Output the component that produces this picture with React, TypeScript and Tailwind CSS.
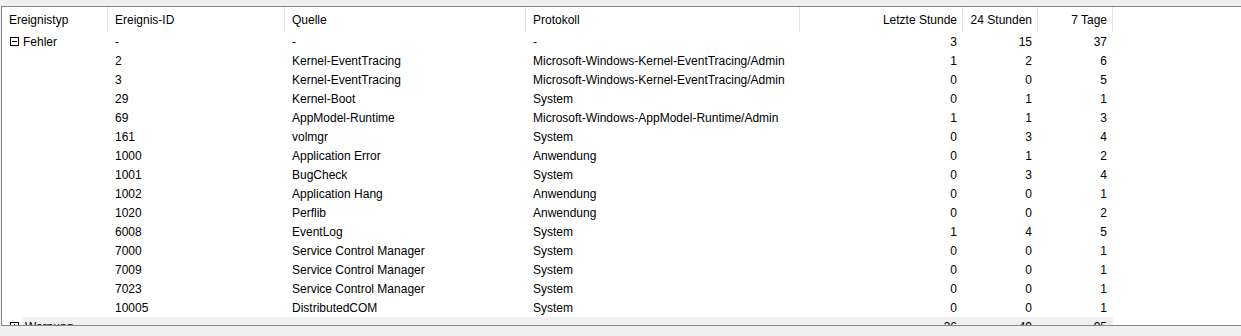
import React from 'react';

type Col = { label: string; w: string; right?: boolean };

const cols: Col[] = [
  { label: 'Ereignistyp', w: 'w-[106px]' },
  { label: 'Ereignis-ID', w: 'w-[177px]' },
  { label: 'Quelle', w: 'w-[241px]' },
  { label: 'Protokoll', w: 'w-[274px]' },
  { label: 'Letzte Stunde', w: 'w-[163px]', right: true },
  { label: '24 Stunden', w: 'w-[75px]', right: true },
  { label: '7 Tage', w: 'w-[75px]', right: true },
];

// [id, quelle, protokoll, h, 24h, 7d]
const rows: string[][] = [
  ['2', 'Kernel-EventTracing', 'Microsoft-Windows-Kernel-EventTracing/Admin', '1', '2', '6'],
  ['3', 'Kernel-EventTracing', 'Microsoft-Windows-Kernel-EventTracing/Admin', '0', '0', '5'],
  ['29', 'Kernel-Boot', 'System', '0', '1', '1'],
  ['69', 'AppModel-Runtime', 'Microsoft-Windows-AppModel-Runtime/Admin', '1', '1', '3'],
  ['161', 'volmgr', 'System', '0', '3', '4'],
  ['1000', 'Application Error', 'Anwendung', '0', '1', '2'],
  ['1001', 'BugCheck', 'System', '0', '3', '4'],
  ['1002', 'Application Hang', 'Anwendung', '0', '0', '1'],
  ['1020', 'Perflib', 'Anwendung', '0', '0', '2'],
  ['6008', 'EventLog', 'System', '1', '4', '5'],
  ['7000', 'Service Control Manager', 'System', '0', '0', '1'],
  ['7009', 'Service Control Manager', 'System', '0', '0', '1'],
  ['7023', 'Service Control Manager', 'System', '0', '0', '1'],
  ['10005', 'DistributedCOM', 'System', '0', '0', '1'],
];

function Expander({ open }: { open: boolean }) {
  return (
    <svg width="9" height="9" viewBox="0 0 9 9" className="shrink-0" shapeRendering="crispEdges">
      <rect x="0.5" y="0.5" width="8" height="8" fill="white" stroke="#000" />
      <line x1="2" y1="4.5" x2="7" y2="4.5" stroke="#000" />
      {!open && <line x1="4.5" y1="2" x2="4.5" y2="7" stroke="#000" />}
    </svg>
  );
}

function Cells({ values, grey }: { values: string[]; grey?: boolean }) {
  return (
    <>
      {values.map((v, i) => {
        const c = cols[i + 1];
        return (
          <div
            key={i}
            className={`${c.w} shrink-0 whitespace-nowrap ${c.right ? 'text-right pr-[6px]' : 'pl-[7px]'} ${grey ? 'bg-[#f0f0f0]' : ''}`}
          >
            {v}
          </div>
        );
      })}
    </>
  );
}

export default function App() {
  return (
    <div className="h-[336px] w-full overflow-hidden bg-[#f0f0f0] pt-[6px] pl-[1px] font-['Liberation_Sans',Arial,sans-serif] text-[12px] leading-[21px] text-black">
      <div className="h-[320px] overflow-hidden border-t border-l border-b border-[#828790] bg-white">
        {/* Header */}
        <div className="flex h-[25px]">
          {cols.map(c => (
            <div
              key={c.label}
              className={`${c.w} shrink-0 flex items-center pt-[2px] whitespace-nowrap border-r border-[#e5e5e5] ${c.right ? 'justify-end pr-[5px]' : 'pl-[7px]'}`}
            >
              {c.label}
            </div>
          ))}
        </div>

        {/* Fehler group */}
        <div className="flex h-[19px]">
          <div className="w-[106px] shrink-0 flex items-center pl-[8px] gap-[4px]">
            <Expander open />
            <span className="pt-[1px]">Fehler</span>
          </div>
          <Cells values={['-', '-', '-', '3', '15', '37']} />
        </div>
        {rows.map((r, i) => (
          <div key={i} className="flex h-[19px]">
            <div className="w-[106px] shrink-0" />
            <Cells values={r} />
          </div>
        ))}

        {/* Warnung group (collapsed, highlighted) */}
        <div className="flex h-[19px]">
          <div className="w-[106px] shrink-0 flex">
            <div className="w-[21px] shrink-0 flex items-center pl-[8px]">
              <Expander open={false} />
            </div>
            <div className="flex-1 bg-[#f0f0f0] pl-[2px]">Warnung</div>
          </div>
          <Cells grey values={['', '', '', '36', '49', '95']} />
        </div>
      </div>
    </div>
  );
}
